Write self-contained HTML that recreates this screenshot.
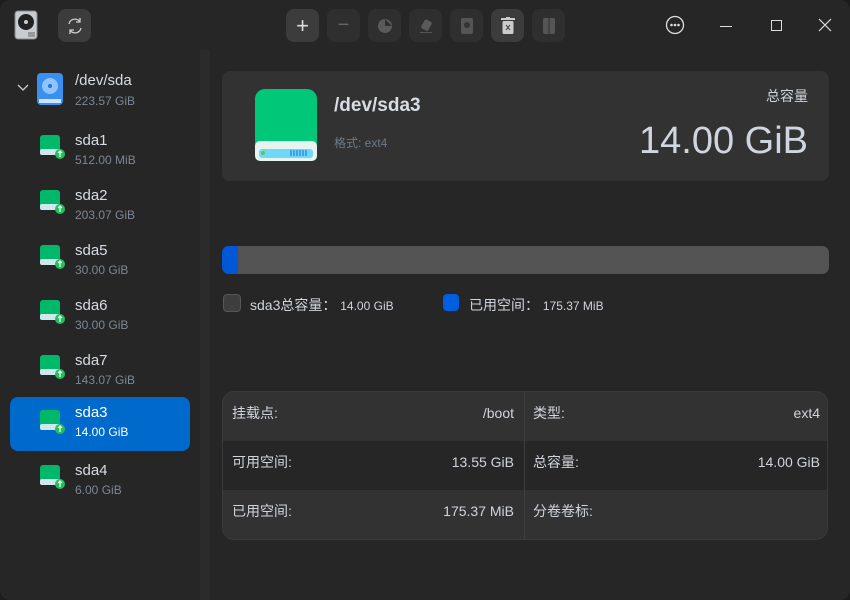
<!DOCTYPE html>
<html><head><meta charset="utf-8"><style>
*{margin:0;padding:0;box-sizing:border-box}
body{width:850px;height:600px;background:#1c1c1c;font-family:"Liberation Sans","Noto Sans CJK SC",sans-serif;color:#d0d4dc;overflow:hidden;position:relative}
.win{position:absolute;inset:0;background:#262626;border-radius:10px;overflow:hidden}
.title{position:absolute;left:0;top:0;width:850px;height:50px;background:#262626}
.btn{position:absolute;top:9px;width:33px;height:33px;border-radius:8px;background:#2f2f2f;display:flex;align-items:center;justify-content:center;color:#666}
.btn.on{background:#3c3c3c;color:#ddd}
.side{position:absolute;left:0;top:50px;width:200px;height:550px;background:#262626}
.gap{position:absolute;left:200px;top:50px;width:10px;height:550px;background:#2b2b2b}
.main{position:absolute;left:210px;top:50px;width:640px;height:550px;background:#262626;border-top-left-radius:8px}
.item{position:absolute;left:10px;width:180px;height:54px;border-radius:8px}
.item .n{position:absolute;left:65px;top:6px;font-size:15px;color:#d8dce4}
.item .s{position:absolute;left:65px;top:27px;font-size:12px;color:#7d8794}
.item.sel{background:#0069cc}
.item.sel .n,.item.sel .s{color:#fff}
.card{position:absolute;left:222px;top:71px;width:607px;height:110px;background:#323232;border-radius:8px}
.tbl{position:absolute;left:222px;top:391px;width:606px;height:149px;border:1px solid #3a3a3a;border-radius:12px;overflow:hidden;background:#323232}
.row{position:absolute;left:0;width:606px;height:50px;font-size:14px}
.row span{position:absolute;top:0;height:42px;line-height:20px;display:flex;align-items:center}
</style></head><body><div class="win">
<div class="title">
 <svg style="position:absolute;left:14px;top:10px" width="24" height="30" viewBox="0 0 24 30"><rect x="1" y="1" width="22" height="28" rx="3" fill="#c9ccd0" stroke="#888"/><circle cx="12" cy="12" r="8" fill="#222"/><circle cx="12" cy="12" r="2" fill="#ccc"/><rect x="14" y="22" width="7" height="5" fill="#999"/></svg>
 <div class="btn on" style="left:58px"><svg width="20" height="20" viewBox="0 0 20 20" fill="none" stroke="#ccc" stroke-width="1.3"><path d="M4 8a6 6 0 0 1 11-2M16 12a6 6 0 0 1-11 2"/><path d="M15 2v4h-4M5 18v-4h4"/></svg></div>
 <div class="btn on" style="left:286px;font-size:22px;font-weight:300">+</div>
 <div class="btn" style="left:327px;font-size:20px">−</div>
 <div class="btn" style="left:368px"><svg width="16" height="16"><circle cx="8" cy="8" r="7" fill="#5a5a5a"/><path d="M8 1v7h7" fill="#2f2f2f"/></svg></div>
 <div class="btn" style="left:409px"><svg width="16" height="16"><rect x="4" y="2" width="8" height="10" rx="2" transform="rotate(30 8 8)" fill="#5a5a5a"/><rect x="2" y="14" width="12" height="1" fill="#555"/></svg></div>
 <div class="btn" style="left:450px"><svg width="14" height="18"><rect x="1" y="1" width="12" height="16" rx="2" fill="#555"/><circle cx="7" cy="8" r="3" fill="#333"/></svg></div>
 <div class="btn on" style="left:491px"><svg width="14" height="18"><rect x="0" y="1" width="14" height="2" fill="#ccc"/><rect x="5" y="0" width="4" height="2" fill="#ccc"/><rect x="1.5" y="4" width="11" height="13" rx="1.5" fill="#ccc"/><path d="M5 8l4 5M9 8l-4 5" stroke="#333"/></svg></div>
 <div class="btn" style="left:532px"><svg width="14" height="18"><rect x="1" y="1" width="12" height="16" rx="2" fill="#555"/><path d="M7 0v18" stroke="#2f2f2f"/></svg></div>
 <svg style="position:absolute;left:665px;top:15px" width="20" height="20"><circle cx="10" cy="10" r="8.5" fill="none" stroke="#ddd" stroke-width="1.3"/><circle cx="6.5" cy="10" r="1.3" fill="#ddd"/><circle cx="10" cy="10" r="1.3" fill="#ddd"/><circle cx="13.5" cy="10" r="1.3" fill="#ddd"/></svg>
 <div style="position:absolute;left:720px;top:26px;width:12px;height:1px;background:#ddd"></div>
 <div style="position:absolute;left:771px;top:20px;width:11px;height:11px;border:1.3px solid #ddd"></div>
 <svg style="position:absolute;left:818px;top:18px" width="14" height="14"><path d="M1 1l12 12M13 1L1 13" stroke="#ddd" stroke-width="1.2"/></svg>
</div>
<div class="side">
 <svg style="position:absolute;left:17px;top:34px" width="12" height="8"><path d="M1 1l5 5 5-5" stroke="#ccc" fill="none" stroke-width="1.3"/></svg>
 <svg style="position:absolute;left:37px;top:23px" width="26" height="32"><rect x="0" y="0" width="26" height="32" rx="4" fill="#3a8ff0"/><circle cx="13" cy="13" r="8" fill="#8fc4ff"/><circle cx="13" cy="13" r="2" fill="#2a70d0"/><rect x="2" y="26" width="22" height="4" fill="#cfe4ff"/></svg>
 <div style="position:absolute;left:75px;top:22px;font-size:15px;color:#d8dce4">/dev/sda</div>
 <div style="position:absolute;left:75px;top:44px;font-size:12px;color:#7d8794">223.57 GiB</div>
</div>
<div class="gap"></div>
<div class="main"></div>
<div style="position:absolute;top:126px;left:0;width:200px">
 <div class="item" style="top:0"><div class="n">sda1</div><div class="s">512.00 MiB</div></div>
 <div class="item" style="top:55px"><div class="n">sda2</div><div class="s">203.07 GiB</div></div>
 <div class="item" style="top:110px"><div class="n">sda5</div><div class="s">30.00 GiB</div></div>
 <div class="item" style="top:165px"><div class="n">sda6</div><div class="s">30.00 GiB</div></div>
 <div class="item" style="top:220px"><div class="n">sda7</div><div class="s">143.07 GiB</div></div>
 <div class="item sel" style="top:271px;height:54px"><div class="n" style="top:7px">sda3</div><div class="s" style="top:28px">14.00 GiB</div></div>
 <div class="item" style="top:330px"><div class="n">sda4</div><div class="s">6.00 GiB</div></div>
</div>
<svg width="0" height="0" style="position:absolute"><defs><g id="pd"><rect x="0" y="0" width="20" height="19" rx="3" fill="#00b86a"/><rect x="0" y="14" width="20" height="6" rx="2" fill="#cfe8ee"/><circle cx="20" cy="19" r="5" fill="#22c05a"/><path d="M20 16v6M18 18l2-2 2 2" stroke="#fff" stroke-width="1.2" fill="none"/></g></defs></svg>
<svg style="position:absolute;left:40px;top:135px" width="28" height="28"><use href="#pd"/></svg>
<svg style="position:absolute;left:40px;top:190px" width="28" height="28"><use href="#pd"/></svg>
<svg style="position:absolute;left:40px;top:245px" width="28" height="28"><use href="#pd"/></svg>
<svg style="position:absolute;left:40px;top:300px" width="28" height="28"><use href="#pd"/></svg>
<svg style="position:absolute;left:40px;top:355px" width="28" height="28"><use href="#pd"/></svg>
<svg style="position:absolute;left:40px;top:410px" width="28" height="28"><use href="#pd"/></svg>
<svg style="position:absolute;left:40px;top:465px" width="28" height="28"><use href="#pd"/></svg>
<div class="card">
 <svg style="position:absolute;left:33px;top:18px" width="62" height="72"><rect x="0" y="0" width="62" height="66" rx="10" fill="#00c878"/><rect x="0" y="52" width="62" height="20" rx="5" fill="#e8f4f2"/><rect x="4" y="60" width="54" height="9" rx="3" fill="#6fd8f8"/><circle cx="8" cy="64" r="2" fill="#5c5"/><path d="M36 61v6M39 61v6M42 61v6M45 61v6M48 61v6M51 61v6" stroke="#1a7fe0" stroke-width="1.2"/></svg>
 <div style="position:absolute;left:112px;top:24px;font-size:19px;font-weight:bold;color:#d8dce4">/dev/sda3</div>
 <div style="position:absolute;left:112px;top:63px;font-size:12px;color:#6d7a88">格式: ext4</div>
 <div style="position:absolute;right:21px;top:15px;font-size:14px;color:#d0d4dc">总容量</div>
 <div style="position:absolute;right:21px;top:49px;font-size:38px;color:#d0d6e0">14.00 GiB</div>
</div>
<div style="position:absolute;left:222px;top:246px;width:607px;height:28px;background:#545454;border-radius:7px;overflow:hidden"><div style="width:16px;height:28px;background:#0058d8"></div></div>
<div style="position:absolute;left:223px;top:294px;width:18px;height:18px;border-radius:4px;background:#3e3e3e;border:1px solid #555"></div>
<div style="position:absolute;left:250px;top:295px;font-size:14px">sda3总容量： <span style="font-size:12px">14.00 GiB</span></div>
<div style="position:absolute;left:443px;top:294px;width:16px;height:17px;border-radius:4px;background:#005ee0"></div>
<div style="position:absolute;left:469px;top:295px;font-size:14px">已用空间： <span style="font-size:12px">175.37 MiB</span></div>
<div class="tbl">
 <div class="row" style="top:0;background:#323232"><span style="left:9px">挂载点:</span><span style="right:315px">/boot</span><span style="left:310px">类型:</span><span style="right:9px">ext4</span></div>
 <div class="row" style="top:49px;background:#262626"><span style="left:9px">可用空间:</span><span style="right:315px">13.55 GiB</span><span style="left:310px">总容量:</span><span style="right:9px">14.00 GiB</span></div>
 <div class="row" style="top:98px;background:#323232"><span style="left:9px">已用空间:</span><span style="right:315px">175.37 MiB</span><span style="left:310px">分卷卷标:</span></div>
 <div style="position:absolute;left:301px;top:0;width:1px;height:149px;background:#3e3e3e"></div>
</div>
</div></body></html>
